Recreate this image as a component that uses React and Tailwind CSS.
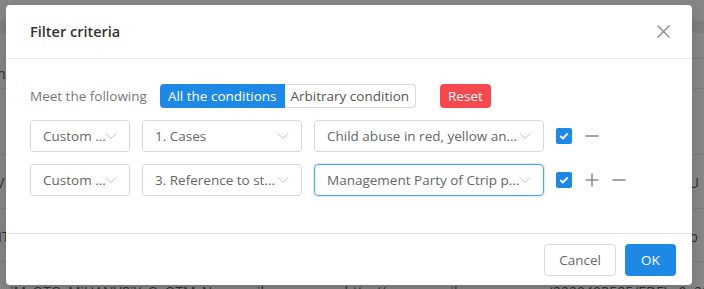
import React from 'react';

const font = { fontFamily: '"Open Sans", "Noto Sans", Arial, sans-serif' };

function Chevron() {
  return (
    <svg width="12" height="8" viewBox="0 0 12 8" className="shrink-0">
      <path d="M1 1.5 L6 6.5 L11 1.5" fill="none" stroke="#bfbfbf" strokeWidth="1" />
    </svg>
  );
}

function Select({ width, text, focused }) {
  return (
    <div
      className={`flex h-8 items-center justify-between rounded-[4px] border pl-3 pr-3 text-[13.5px] text-[#666] ${
        focused ? 'border-[#40a9ff] shadow-[0_0_0_1px_rgba(30,136,229,0.15)]' : 'border-[#d9d9d9]'
      } ${width}`}
    >
      <span className="overflow-hidden whitespace-nowrap">{text}</span>
      <Chevron />
    </div>
  );
}

function Checkbox() {
  return (
    <div className="flex h-4 w-4 items-center justify-center rounded-[2px] bg-[#1e88e5]">
      <svg width="10" height="8" viewBox="0 0 10 8">
        <path d="M1.3 4 L3.9 6.4 L8.7 1.5" fill="none" stroke="#fff" strokeWidth="1.8" />
      </svg>
    </div>
  );
}

function Minus() {
  return (
    <svg width="14" height="14" viewBox="0 0 14 14">
      <path d="M0.5 7 H13.5" stroke="#8c8c8c" strokeWidth="1.6" />
    </svg>
  );
}

function Plus() {
  return (
    <svg width="14" height="14" viewBox="0 0 14 14">
      <path d="M0.5 7 H13.5 M7 0.5 V13.5" stroke="#8c8c8c" strokeWidth="1.6" />
    </svg>
  );
}

function ConditionRow({ field, source, value, focused, showPlus }) {
  return (
    <div className="flex items-center">
      <Select width="w-[100px]" text={field} />
      <div className="ml-3">
        <Select width="w-[160px]" text={source} />
      </div>
      <div className="ml-3">
        <Select width="w-[230px]" text={value} focused={focused} />
      </div>
      <div className="ml-3 flex items-center gap-[13px]">
        <Checkbox />
        {showPlus && <Plus />}
        <Minus />
      </div>
    </div>
  );
}

export default function App() {
  return (
    <div className="relative h-[289px] w-[704px] overflow-hidden bg-[#868686]" style={font}>
      {/* page behind the mask */}
      <div className="flex flex-col text-[14px] text-[#2f2f2f]">
        <div className="h-[21px]" />
        <div className="h-[12px] bg-[#7d7d7d]" />
        <div className="flex h-[56px] items-end justify-between border-b border-[#7a7a7a] pb-[4px]">
          <span className="-ml-[3px]">n</span>
          <div className="mb-[-5px] h-[31px] w-[20px] rounded-l-[4px] border border-r-0 border-[#7a7a7a]" />
        </div>
        <div className="h-[66px] border-b border-[#7a7a7a]" />
        <div className="flex h-[54px] items-center justify-between border-b border-[#7a7a7a] pt-[2px]">
          <span className="-ml-[4px]">V</span>
          <span className="mr-[5px]">U</span>
        </div>
        <div className="flex h-[53px] items-center justify-between border-b border-[#7a7a7a] pt-[2px]">
          <span className="-ml-[2px]">IT</span>
          <span className="mr-[6px]">o</span>
        </div>
        <div className="flex justify-between pt-[20px] leading-[20px]">
          <span className="ml-[10px] whitespace-nowrap">iM_OTQ_MiUANV8iY_Q_OTM_Nnnn...ail</span>
          <span className="whitespace-nowrap">http://www.email...</span>
          <span className="mr-[-6px] whitespace-nowrap">(2229493585/EDF)...0..20</span>
        </div>
      </div>

      {/* modal */}
      <div className="absolute left-[6px] top-[5px] flex h-[280px] w-[686px] flex-col rounded-[4px] bg-white shadow-[0_4px_12px_rgba(0,0,0,0.15)]">
        <div className="flex h-[54px] shrink-0 items-center justify-between border-b border-[#e8e8e8] pl-6 pr-[22px]">
          <span className="text-[14.5px] font-semibold text-[#333]">Filter criteria</span>
          <svg width="13" height="13" viewBox="0 0 13 13">
            <path d="M0.5 0.5 L12.5 12.5 M12.5 0.5 L0.5 12.5" stroke="#8a8a8a" strokeWidth="1.4" />
          </svg>
        </div>

        <div className="flex flex-1 flex-col gap-3 pl-6 pt-[25px]">
          <div className="flex h-6 items-center text-[13.5px]">
            <span className="text-[#777]">Meet the following</span>
            <div className="ml-[13px] flex h-6">
              <div className="flex items-center rounded-l-[4px] bg-[#1e88e5] px-2 text-white">All the conditions</div>
              <div className="flex items-center rounded-r-[4px] border border-l-0 border-[#d9d9d9] px-[6px] text-[#555]">
                Arbitrary condition
              </div>
            </div>
            <div className="ml-6 flex h-6 items-center rounded-[4px] bg-[#f5484f] px-2 text-white">Reset</div>
          </div>
          <ConditionRow field="Custom ..." source="1. Cases" value="Child abuse in red, yellow an..." />
          <ConditionRow
            field="Custom ..."
            source="3. Reference to st..."
            value="Management Party of Ctrip p..."
            focused
            showPlus
          />
        </div>

        <div className="flex h-[52px] shrink-0 items-start justify-end gap-[9px] border-t border-[#e8e8e8] pr-4 pt-[10px]">
          <div className="flex h-[32px] w-[72px] items-center justify-center rounded-[4px] border border-[#d9d9d9] text-[13.5px] text-[#666]">
            Cancel
          </div>
          <div className="flex h-[32px] w-[51px] items-center justify-center rounded-[4px] bg-[#1e88e5] text-[13.5px] text-white">
            OK
          </div>
        </div>
      </div>
    </div>
  );
}
